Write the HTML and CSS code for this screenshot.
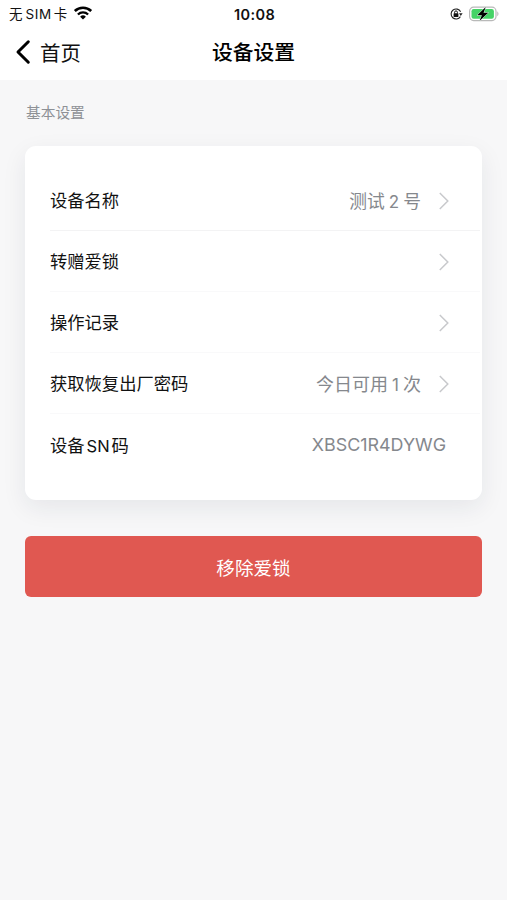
FILE: index.html
```html
<!DOCTYPE html>
<html lang="zh-CN">
<head>
  <meta charset="UTF-8">
  <meta name="viewport" content="width=device-width, initial-scale=1.0">
  <title>设备设置</title>
  <link rel="stylesheet" href="styles.css">
</head>
<body>
  <header class="header">
    <!-- Status bar -->
    <div class="status-bar">
      <div class="carrier">
        <span>无</span><span class="sim">SIM</span><span>卡</span>
        <svg class="wifi" width="20" height="14" viewBox="0 0 20 14">
          <path d="M1.8 5a11.8 11.8 0 0 1 16.4 0" fill="none" stroke="#000" stroke-width="2.6"/>
          <path d="M4.9 8.5a7.3 7.3 0 0 1 10.2 0" fill="none" stroke="#000" stroke-width="2.3"/>
          <path d="M10 13.6L7.1 10.7a4.2 4.2 0 0 1 5.8 0z" fill="#000"/>
        </svg>
      </div>
      <div class="time">10:08</div>
      <div class="indicators">
        <svg width="14" height="14" viewBox="0 0 14 14">
          <path d="M11.4 9.6A5 5 0 1 1 11.6 4.8" fill="none" stroke="#222" stroke-width="1.1"/>
          <path d="M10 6.2h3.6l-1.8 2.8z" fill="#222"/>
          <rect x="4.6" y="6.3" width="4.8" height="3.6" rx="0.5" fill="#111"/>
          <path d="M5.6 6.5V5.3a1.4 1.4 0 0 1 2.8 0v1.2" fill="none" stroke="#111" stroke-width="1"/>
        </svg>
        <svg width="31" height="16" viewBox="0 0 31 16">
          <rect x="0.6" y="1.2" width="26.4" height="13.4" rx="4" fill="#fff" stroke="#b9b9b9" stroke-width="1.2"/>
          <rect x="2.5" y="3.1" width="22.4" height="9.6" rx="2.2" fill="#45d366"/>
          <path d="M28.3 5.6c1.5.6 1.5 4 0 4.6z" fill="#b4b4b4"/>
          <path d="M16.8 1L8.2 9.3h4.7L10.4 15l8.9-8.2h-4.8z" fill="#000" stroke="#e8f8ec" stroke-width="1" paint-order="stroke"/>
        </svg>
      </div>
    </div>
    <!-- Navigation bar -->
    <nav class="nav">
      <a class="back">
        <svg width="16" height="26" viewBox="0 0 16 26">
          <path d="M13.3 2.8L3 13l10.3 10.2" fill="none" stroke="#000" stroke-width="3" stroke-linecap="round" stroke-linejoin="round"/>
        </svg>
        <span>首页</span>
      </a>
      <h1 class="title">设备设置</h1>
    </nav>
  </header>

  <main class="content">
    <h2 class="section-title">基本设置</h2>
    <ul class="card">
      <li class="row">
        <span class="label">设备名称</span>
        <span class="value">测试<span class="num">2</span>号</span>
        <svg class="arrow" viewBox="0 0 10 18"><path d="M0.8 1l8 8-8 8"/></svg>
      </li>
      <li class="row">
        <span class="label">转赠爱锁</span>
        <svg class="arrow" viewBox="0 0 10 18"><path d="M0.8 1l8 8-8 8"/></svg>
      </li>
      <li class="row">
        <span class="label">操作记录</span>
        <svg class="arrow" viewBox="0 0 10 18"><path d="M0.8 1l8 8-8 8"/></svg>
      </li>
      <li class="row">
        <span class="label">获取恢复出厂密码</span>
        <span class="value times">今日可用<span class="num">1</span>次</span>
        <svg class="arrow" viewBox="0 0 10 18"><path d="M0.8 1l8 8-8 8"/></svg>
      </li>
      <li class="row">
        <span class="label">设备<span class="sn">SN</span>码</span>
        <span class="value code">XBSC1R4DYWG</span>
      </li>
    </ul>
    <button class="remove">移除爱锁</button>
  </main>
</body>
</html>
```
FILE: styles.css
```css
* {
  box-sizing: border-box;
}

body {
  margin: 0;
  min-height: 100vh;
  background-color: #f7f7f8;
  color: #111;
  font-family: Inter, "Noto Sans CJK SC", sans-serif;
}

.header {
  height: 80px;
  background-color: #fff;
}

.status-bar {
  display: grid;
  grid-template-columns: 1fr auto 1fr;
  align-items: center;
  height: 27px;
  padding: 0 7px 0 9px;
  font-size: 13.5px;
  line-height: 27px;
}

.carrier {
  display: flex;
  align-items: center;
  padding-top: 1px;
}

.sim {
  margin: 0 2px 0 3px;
  letter-spacing: 0.6px;
}

.wifi {
  margin: 0 0 3px 6px;
}

.time {
  font-size: 14.5px;
  font-weight: 600;
  letter-spacing: 0.4px;
}

.indicators {
  display: flex;
  justify-content: flex-end;
  align-items: center;
  gap: 6px;
}

.nav {
  display: grid;
  grid-template-columns: 1fr auto 1fr;
  align-items: center;
  height: 49px;
  padding: 0 15px;
}

.back {
  display: flex;
  align-items: center;
  gap: 9px;
  font-size: 20.5px;
}

.title {
  margin: 0 0 2px;
  font-size: 20.8px;
  font-weight: 500;
  color: #000;
}

.content {
  padding: 21px 25px;
}

.section-title {
  margin: 0 0 21px 1px;
  font-size: 14.7px;
  font-weight: 400;
  line-height: 24px;
  color: #8e9196;
}

/* Settings list */
.card {
  height: 354px;
  margin: 0 0 36px;
  padding: 24px 2px 25px 25px;
  list-style: none;
  background-color: #fff;
  border-radius: 11px;
  box-shadow: 0 8px 24px rgba(30, 40, 60, 0.08);
}

.row {
  display: flex;
  align-items: center;
  height: 61px;
  padding-right: 31px;
  border-bottom: 1px solid #f9f9fa;
}

.row:first-child {
  border-bottom-color: #f3f3f4;
}

.row:last-child {
  padding-right: 34px;
  border-bottom: none;
}

.label {
  flex: 1;
  margin-bottom: 1px;
  font-size: 17.3px;
}

.sn {
  margin: 0 2px;
  font-size: 16.5px;
}

.value {
  margin-bottom: 1px;
  font-size: 17.8px;
  color: #85888d;
}

.times {
  font-size: 18px;
}

.num {
  margin: 0 4px;
  font-size: 17px;
}

.code {
  margin-bottom: 0;
  font-size: 17.9px;
}

.arrow {
  width: 10px;
  height: 18px;
  margin: 1px 0 0 18px;
  fill: none;
  stroke: #c8c9cc;
  stroke-width: 1.5;
}

.remove {
  display: block;
  width: 100%;
  height: 61px;
  padding-bottom: 2px;
  border: none;
  border-radius: 6px;
  background-color: #e05851;
  color: #fff;
  font-family: inherit;
  font-size: 18.6px;
}
```
